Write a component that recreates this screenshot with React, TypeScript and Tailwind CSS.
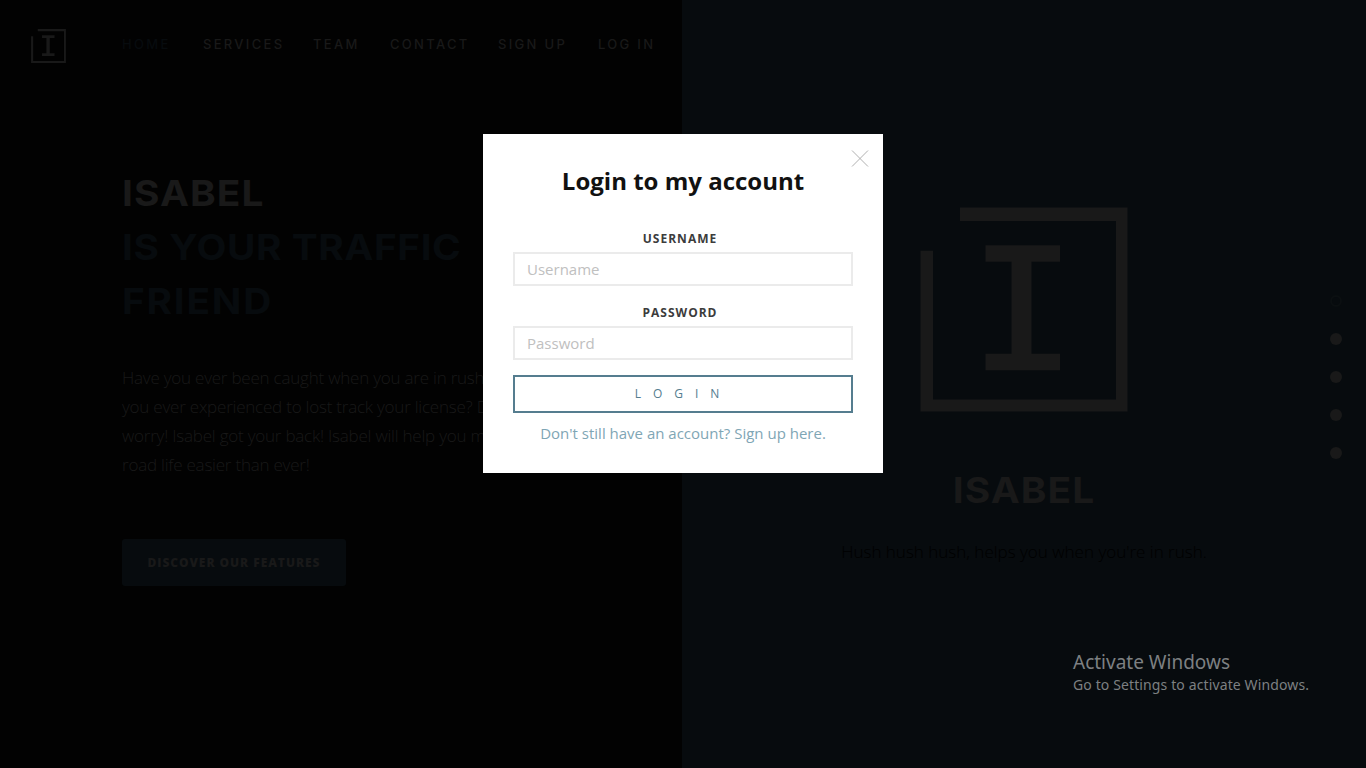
import React from 'react';

interface NavItem {
  label: string;
  box: string;
  text: string;
}

const NAV_ITEMS: NavItem[] = [
  { label: 'Home', box: 'w-[81px]', text: 'text-[#070b0e]' },
  { label: 'Services', box: 'w-[110px]', text: 'text-[#191919]' },
  { label: 'Team', box: 'w-[77px]', text: 'text-[#191919]' },
  { label: 'Contact', box: 'w-[108px]', text: 'text-[#191919]' },
  { label: 'Sign up', box: 'w-[100px]', text: 'text-[#191919]' },
  { label: 'Log in', box: 'w-[70px]', text: 'text-[#191919]' },
];

const SECTIONS = ['Home', 'Services', 'Team', 'Contact', 'Account'];

const Logo: React.FC<{ className: string }> = ({ className }) => (
  <svg viewBox="0 0 208 206" className={className} fill="#191919" preserveAspectRatio="none">
    <path d="M40 .5h167.500v205H.5V44h12.500v149.500h183V14H40z" />
    <path d="M65.500 38.500h74.500v16.500h-28.500v92.500h28.500v16.500h-74.500v-16.500h26v-92.500h-26z" />
  </svg>
);

const Header = () => (
  <header className="flex h-[89px] shrink-0 items-center pl-[31px]">
    <Logo className="mt-[3px] h-[34px] w-[35px] shrink-0" />
    <nav className="-mt-0.5 ml-14 flex font-[Inter,sans-serif] text-[13px] font-medium leading-[18px] tracking-[2.3px] whitespace-nowrap uppercase">
      {NAV_ITEMS.map(item => (
        <a key={item.label} className={`${item.box} ${item.text}`}>
          {item.label}
        </a>
      ))}
    </nav>
  </header>
);

const Intro = () => (
  <section className="box-content flex w-[420px] flex-col items-start pt-[77px] pl-[122px]">
    <h1 className="origin-left scale-x-[1.08] font-[Inter,sans-serif] text-[36px] leading-[54px] font-bold whitespace-nowrap text-[#070b0e] uppercase">
      <span className="block tracking-[1px] text-[#191919]">Isabel</span>
      <span className="block tracking-[0.5px]">is your traffic</span>
      <span className="block tracking-[1.6px]">friend</span>
    </h1>
    <p className="mt-[35px] text-[17px] leading-[29px] font-light tracking-[-0.22px] whitespace-nowrap text-[#191919]">
      Have you ever been caught when you are in rush? Have
      <br />
      you ever experienced to lost track your license? Don't
      <br />
      worry! Isabel got your back! Isabel will help you make
      <br />
      road life easier than ever!
    </p>
    <button className="mt-[60px] h-[47px] w-[224px] rounded-[3px] bg-[#070b0e] text-xs font-extrabold tracking-[0.95px] whitespace-nowrap text-[#191919] uppercase">
      Discover our features
    </button>
  </section>
);

const Showcase = () => (
  <section className="flex flex-1 flex-col items-center bg-[#070b0e] pt-[207px]">
    <Logo className="h-[205px] w-[208px]" />
    <h2 className="mt-[51px] scale-x-[1.08] font-[Inter,sans-serif] text-[36px] leading-[54px] font-bold tracking-[1px] text-[#191919] uppercase">
      Isabel
    </h2>
    <p className="mt-[20px] text-[17px] leading-[29px] font-light whitespace-nowrap text-black">
      Hush hush hush, helps you when you're in rush.
    </p>
  </section>
);

const SectionDots = () => (
  <ul className="absolute top-[295px] right-6 flex flex-col gap-[26px]">
    {SECTIONS.map((section, i) => (
      <li
        key={section}
        title={section}
        className={`h-3 w-3 rounded-full ${i === 0 ? 'border-2 border-[#0b0f11]' : 'bg-[#191919]'}`}
      />
    ))}
  </ul>
);

const Field: React.FC<{ label: string; type: string }> = ({ label, type }) => (
  <label className="flex flex-col">
    <span className="pr-[6px] text-center text-xs leading-[27px] font-bold tracking-[1px] text-[#3c3c3c] uppercase">
      {label}
    </span>
    <input
      type={type}
      placeholder={label}
      className="h-[34px] border-2 border-[#ebebeb] px-3 text-[15px] outline-none placeholder:text-[#c0c0c0]"
    />
  </label>
);

const LoginModal = () => (
  <div className="absolute top-[134px] left-[483px] flex h-[339px] w-[400px] flex-col bg-white px-[30px]">
    <button aria-label="Close" className="absolute top-4 right-[14px]">
      <svg width="18" height="17" viewBox="0 0 18 17" stroke="#b0b0b0" fill="none">
        <path d="M1 .5l16 16M17 .5L1 16.500" />
      </svg>
    </button>
    <h3 className="mt-[30px] text-center text-2xl leading-[34px] font-bold whitespace-nowrap text-[#111]">
      Login to my account
    </h3>
    <form className="mt-[27px] flex flex-col">
      <Field label="Username" type="text" />
      <div className="h-[13px]" />
      <Field label="Password" type="password" />
      <button
        type="button"
        className="mt-[15px] h-[38px] border-2 border-[#557d8f] text-xs tracking-[12px] text-[#557d8f] uppercase"
      >
        Login
      </button>
    </form>
    <a className="mt-2 text-center text-[15px] leading-6 whitespace-nowrap text-[#7fa6b5]">
      Don't still have an account? Sign up here.
    </a>
  </div>
);

const Watermark = () => (
  <div className="absolute top-[649px] left-[1073px] font-['Noto_Sans',sans-serif] whitespace-nowrap text-[#7d8082]">
    <p className="text-[19px] leading-[26px]">Activate Windows</p>
    <p className="text-sm leading-5 tracking-[0.12px]">Go to Settings to activate Windows.</p>
  </div>
);

export default function App() {
  return (
    <div className="relative flex h-[768px] w-[1366px] overflow-hidden bg-[#020202] font-['Open_Sans',sans-serif]">
      <div className="flex w-[682px] shrink-0 flex-col">
        <Header />
        <Intro />
      </div>
      <Showcase />
      <SectionDots />
      <LoginModal />
      <Watermark />
    </div>
  );
}
